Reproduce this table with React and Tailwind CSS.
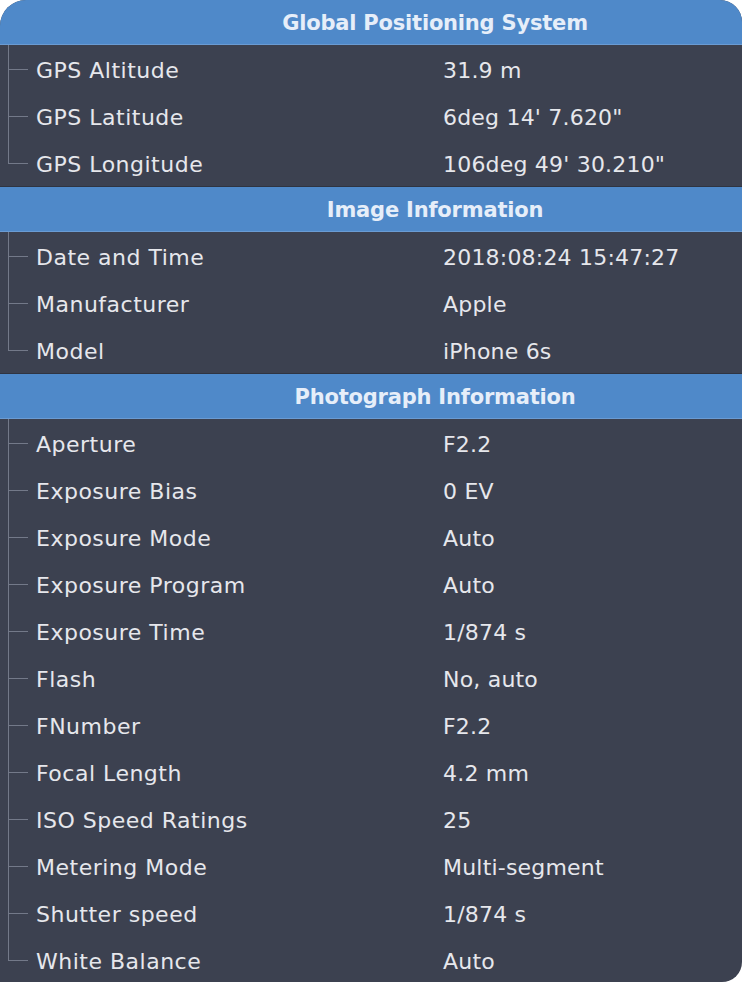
import React from 'react';

const sections = [
  {
    title: 'Global Positioning System',
    rows: [
      ['GPS Altitude', '31.9 m'],
      ['GPS Latitude', '6deg 14\' 7.620"'],
      ['GPS Longitude', '106deg 49\' 30.210"'],
    ],
  },
  {
    title: 'Image Information',
    rows: [
      ['Date and Time', '2018:08:24 15:47:27'],
      ['Manufacturer', 'Apple'],
      ['Model', 'iPhone 6s'],
    ],
  },
  {
    title: 'Photograph Information',
    rows: [
      ['Aperture', 'F2.2'],
      ['Exposure Bias', '0 EV'],
      ['Exposure Mode', 'Auto'],
      ['Exposure Program', 'Auto'],
      ['Exposure Time', '1/874 s'],
      ['Flash', 'No, auto'],
      ['FNumber', 'F2.2'],
      ['Focal Length', '4.2 mm'],
      ['ISO Speed Ratings', '25'],
      ['Metering Mode', 'Multi-segment'],
      ['Shutter speed', '1/874 s'],
      ['White Balance', 'Auto'],
    ],
  },
];

function Row({ label, value, last }) {
  return (
    <div className="relative flex h-[47px] items-center pt-[3px]">
      {/* tree branch */}
      <div className={`absolute left-[8px] top-0 w-px bg-[#737989] ${last ? 'h-1/2' : 'h-full'}`} />
      <div className="absolute left-[8px] top-1/2 h-px w-[20px] bg-[#737989]" />
      <span className="w-[443px] shrink-0 pl-[36px] tracking-[0.5px] text-[#e6e7ec]">{label}</span>
      <span className="text-[#e6e7ec]">{value}</span>
    </div>
  );
}

export default function App() {
  return (
    <div className="min-h-screen bg-white">
      <div
        className="w-[742px] h-[982px] overflow-hidden rounded-tl-[26px] rounded-tr-[22px] rounded-br-[20px] bg-[#3c4150] text-[22px] tracking-[0.2px]"
        style={{ fontFamily: '"DejaVu Sans", "Noto Sans", sans-serif' }}
      >
        {sections.map((s, i) => (
          <div key={s.title}>
            <div
              className={`flex items-center justify-center border-b border-[#6a9bd3] bg-[#4f89c9] pt-[3px] pl-[128px] text-[21px] font-bold tracking-[-0.2px] text-[#e6eef9] ${
                i === 0 ? 'h-[45px]' : 'h-[46px] border-t border-t-[#2f3441]'
              }`}
            >
              {s.title}
            </div>
            {s.rows.map(([l, v], j) => (
              <Row key={l} label={l} value={v} last={j === s.rows.length - 1} />
            ))}
          </div>
        ))}
      </div>
    </div>
  );
}
